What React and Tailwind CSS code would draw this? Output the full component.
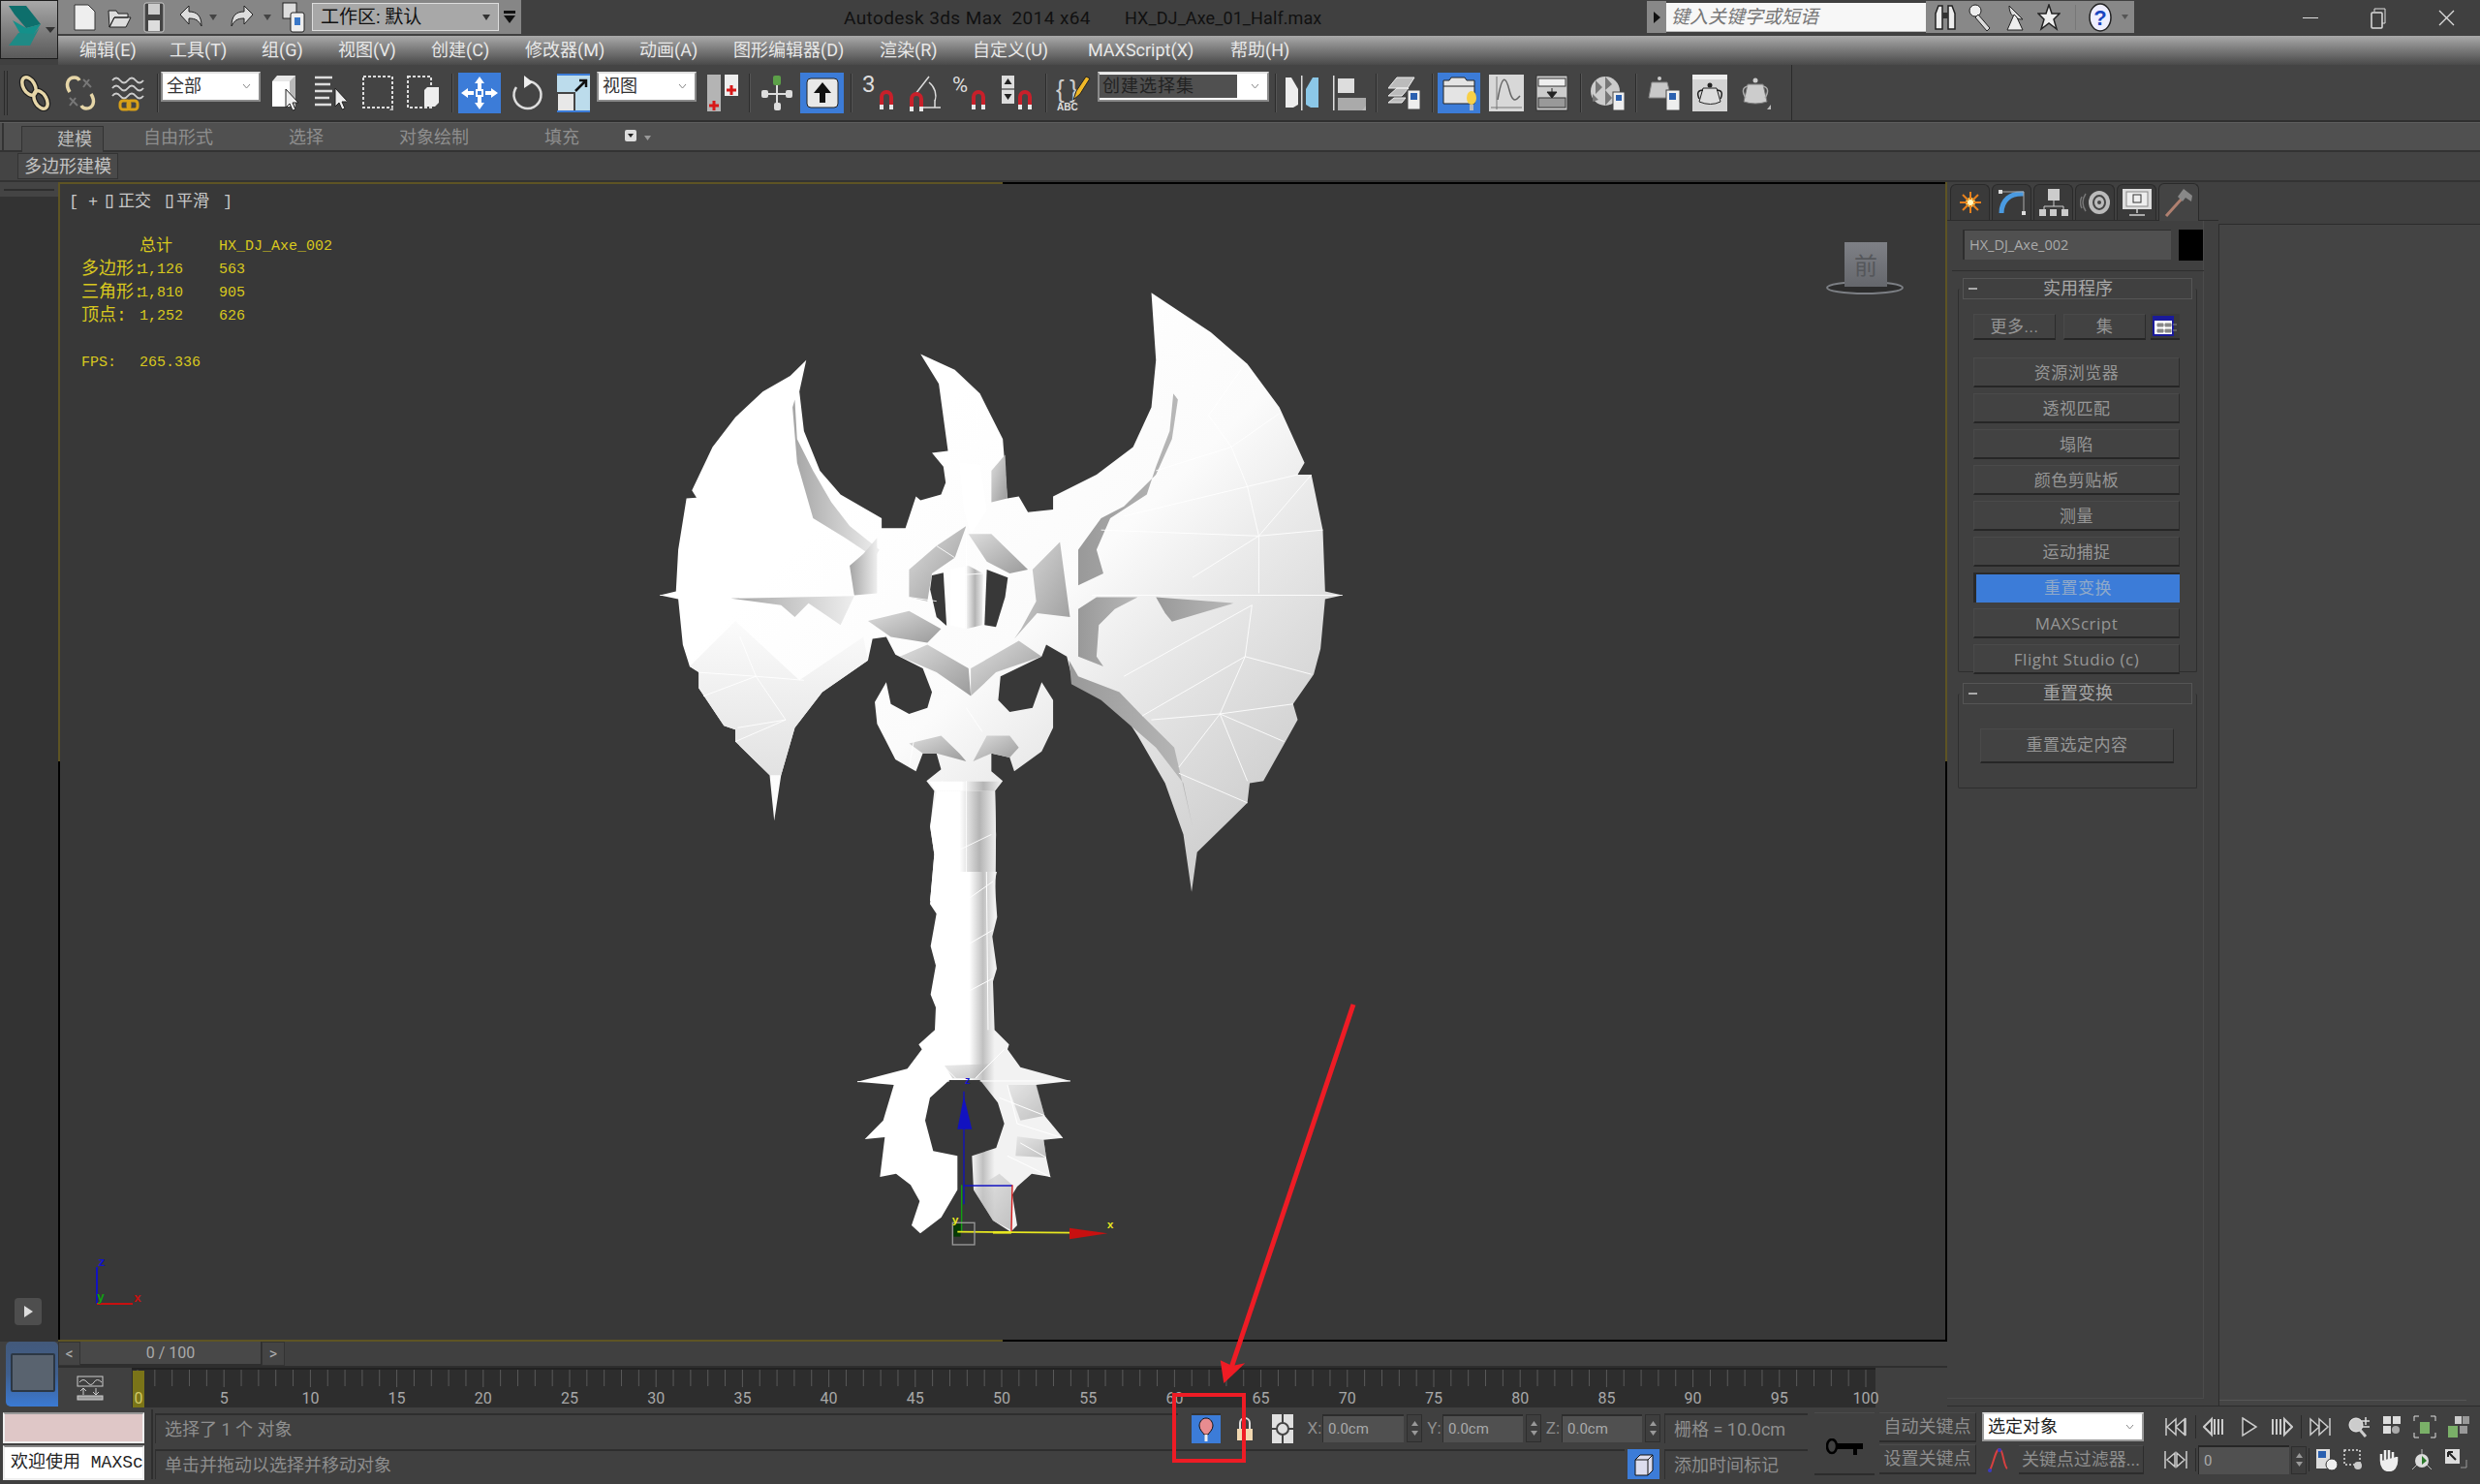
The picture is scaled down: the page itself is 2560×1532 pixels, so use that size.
import React from 'react';

// small helper so every toolbar picture is just an svg with a fixed box
const Svg = ({ w = 34, h = 38, className = '', children }) => (
  <svg width={w} height={h} viewBox={`0 0 ${w} ${h}`} className={`shrink-0 ${className}`}>
    {children}
  </svg>
);

const Sep = ({ className = '' }) => <div className={`w-[2px] h-[40px] bg-[#2c2c2c] border-r border-[#555] shrink-0 ${className}`} />;

const Flyout = ({ x = 30, y = 36 }) => <path d={`M${x} ${y}l4 -5v5z`} fill="#bbb" />;

const Cursor = ({ x, y }) => (
  <path transform={`translate(${x} ${y})`} d="M0 0v19l4 -4 3 7 3 -1 -3 -7h6z" fill="#eee" stroke="#222" strokeWidth="1" />
);

const Magnet = ({ x, y }) => (
  <g transform={`translate(${x} ${y})`}>
    <path d="M2 20V9a7 7 0 0 1 14 0v11h-4V9a3 3 0 0 0 -6 0v11z" fill="#c8202a" />
    <rect x="2" y="17" width="4" height="5" fill="#e8e8e8" />
    <rect x="12" y="17" width="4" height="5" fill="#e8e8e8" />
  </g>
);

const Dropdown = ({ label, className = '', dark = false }) => (
  <div className={`h-[31px] mb-[13px] shrink-0 bg-white border-2 border-[#8a8a8a] border-t-[#e0e0e0] flex items-center justify-between pr-[8px] ${className}`}>
    {dark ? (
      <div className="h-[24px] flex-1 bg-[#505050] text-[#222] text-[18px] pl-[3px] mr-[14px] leading-[24px] tracking-[1px]">{label}</div>
    ) : (
      <span className="text-[#333] text-[18px] pl-[4px] leading-none">{label}</span>
    )}
    <svg width="9" height="6" viewBox="0 0 9 6"><path d="M1 1l3.5 4L8 1" fill="none" stroke="#888" /></svg>
  </div>
);

const Spinner = ({ className = '' }) => (
  <div className={`w-[16px] h-[29px] shrink-0 bg-[#3e3e3e] border border-[#2e2e2e] flex flex-col items-center justify-around py-[4px] ${className}`}>
    <svg width="7" height="5"><path d="M3.5 0L7 5H0z" fill="#999" /></svg>
    <svg width="7" height="5"><path d="M3.5 5L7 0H0z" fill="#999" /></svg>
  </div>
);

const menus = [
  ['编辑(E)', 'w-[93px]'],
  ['工具(T)', 'w-[95px]'],
  ['组(G)', 'w-[79px]'],
  ['视图(V)', 'w-[96px]'],
  ['创建(C)', 'w-[97px]'],
  ['修改器(M)', 'w-[118px]'],
  ['动画(A)', 'w-[97px]'],
  ['图形编辑器(D)', 'w-[151px]'],
  ['渲染(R)', 'w-[96px]'],
  ['自定义(U)', 'w-[119px]'],
  ['MAXScript(X)', 'w-[147px]'],
  ['帮助(H)', 'w-[100px]'],
];

const TitleBar = () => (
  <div className="h-[37px] bg-[#404040] flex items-center">
    <div className="w-[478px] h-[35px] bg-[#868686] flex items-center shrink-0 mt-[-2px]">
      <Svg w={28} h={30} className="ml-[14px]"><path d="M3 2h14l7 7v19H3z" fill="#eee" stroke="#333" /></Svg>
      <Svg w={26} h={26} className="ml-[8px]"><path d="M2 6h8l2 3h10v4H8l-5 10zM8 13h17l-5 10H3z" fill="#ddd" stroke="#222" /></Svg>
      <Svg w={22} h={32} className="ml-[12px]"><rect x="1" y="1" width="20" height="30" rx="2" fill="#444" stroke="#ccc" /><rect x="5" y="2" width="12" height="11" fill="#ccc" /><rect x="5" y="19" width="12" height="11" fill="#ddd" /></Svg>
      <Svg w={26} h={28} className="ml-[14px]"><path d="M2 11l9 -9v6c8 0 13 4 13 15 -3 -6 -6 -8 -13 -8v6z" fill="#ddd" stroke="#222" /></Svg>
      <svg width="8" height="6" className="ml-[6px]"><path d="M0 0h8L4 6z" fill="#444" /></svg>
      <Svg w={26} h={28} className="ml-[13px]"><path d="M24 11l-9 -9v6C7 8 2 12 2 23c3 -6 6 -8 13 -8v6z" fill="#ddd" stroke="#222" /></Svg>
      <svg width="8" height="6" className="ml-[9px]"><path d="M0 0h8L4 6z" fill="#444" /></svg>
      <Svg w={24} h={32} className="ml-[11px]"><rect x="1" y="1" width="14" height="16" fill="#ddd" stroke="#222" /><rect x="9" y="11" width="14" height="20" rx="2" fill="#eee" stroke="#222" /><rect x="13" y="16" width="6" height="8" fill="#3a78c8" /></Svg>
      <div className="ml-[7px] w-[193px] h-[29px] bg-[#a8a8a8] border border-[#ddd] flex items-center justify-between px-[8px] shrink-0">
        <span className="text-[#111] text-[19px] leading-none">工作区: 默认</span>
        <svg width="8" height="6"><path d="M0 0h8L4 6z" fill="#333" /></svg>
      </div>
      <svg width="12" height="14" className="ml-[5px]"><path d="M0 0h12v3H0zM0 5h12L6 13z" fill="#111" /></svg>
    </div>
    <div className="ml-[333px] w-[254px] text-[#111] text-[19px] tracking-[0.4px] whitespace-pre leading-none">Autodesk 3ds Max  2014 x64</div>
    <div className="ml-[36px] w-[204px] text-[#111] text-[18px] tracking-[0.1px] whitespace-nowrap leading-none">HX_DJ_Axe_01_Half.max</div>
    <div className="ml-[335px] w-[20px] h-[33px] bg-[#888] flex items-center justify-center shrink-0 mt-[-2px]">
      <svg width="7" height="12"><path d="M0 0l7 6 -7 6z" fill="#111" /></svg>
    </div>
    <div className="w-[268px] h-[30px] bg-[#f7f7f7] border-b border-[#bbb] text-[#777] italic text-[19px] leading-[30px] pl-[5px] shrink-0 mt-[-2px]">键入关键字或短语</div>
    <div className="w-[215px] h-[33px] bg-[#888] flex items-center shrink-0 mt-[-2px]">
      <Svg w={24} h={28} className="ml-[8px]"><path d="M2 26V10l3 -8h4v24zM15 26V2h4l3 8v16z" fill="#eee" stroke="#222" strokeWidth="1.5" /><rect x="9" y="9" width="6" height="6" fill="#333" /></Svg>
      <Svg w={24} h={30} className="ml-[12px]"><circle cx="7" cy="8" r="6" fill="#eee" stroke="#222" /><path d="M10 12l12 14 -3 3L7 15z" fill="#ddd" stroke="#222" /></Svg>
      <Svg w={24} h={30} className="ml-[12px]"><path d="M6 3c0 9 5 14 14 14z" fill="#ddd" stroke="#222" /><path d="M11 12L4 28h16l-6 -13z" fill="#eee" stroke="#222" /></Svg>
      <Svg w={24} h={28} className="ml-[11px]"><path d="M12 1l3 9h8l-6 6 3 10 -8 -6 -8 6 3 -10 -6 -6h8z" fill="#eee" stroke="#222" strokeWidth="1.5" /></Svg>
      <div className="ml-[15px] w-[1px] h-[26px] bg-[#777]" />
      <Svg w={26} h={30} className="ml-[12px]"><ellipse cx="13" cy="15" rx="11" ry="14" fill="#eef" stroke="#222" strokeWidth="1.5" /><text x="13" y="23" textAnchor="middle" fontSize="22" fontWeight="700" fill="#1a46c0" fontFamily="Liberation Sans">?</text></Svg>
      <svg width="7" height="5" className="ml-[9px]"><path d="M0 0h7L3.5 5z" fill="#555" /></svg>
    </div>
    <div className="ml-[174px] w-[16px] h-[1px] bg-[#ddd] shrink-0" />
    <svg width="16" height="22" className="ml-[54px] shrink-0"><rect x="1" y="5" width="11" height="16" rx="1" fill="none" stroke="#ddd" strokeWidth="1.5" /><path d="M4 4V1h11v15h-3" fill="none" stroke="#ddd" /></svg>
    <svg width="17" height="17" className="ml-[54px] shrink-0"><path d="M1 1l15 15M16 1L1 16" stroke="#ddd" strokeWidth="1.3" /></svg>
  </div>
);

const Toolbar = () => (
  <div className="h-[59px] flex bg-[#444] border-b-2 border-[#2f2f2f]">
    <div className="w-[1850px] flex items-center border-r border-[#2a2a2a] relative">
      <div className="w-[4px] h-[46px] ml-[4px] border-x border-[#2a2a2a] shrink-0 mr-[-8px]" />
      <Svg className="ml-[19px]"><g fill="none" stroke="#1f1f1f" strokeWidth="6"><ellipse cx="11" cy="12" rx="6" ry="10" transform="rotate(-30 11 12)" /><ellipse cx="23" cy="26" rx="6" ry="10" transform="rotate(-30 23 26)" /></g><g fill="none" stroke="#e6d6a8" strokeWidth="3.5"><ellipse cx="11" cy="12" rx="6" ry="10" transform="rotate(-30 11 12)" /><ellipse cx="23" cy="26" rx="6" ry="10" transform="rotate(-30 23 26)" /></g></Svg>
      <Svg className="ml-[13px]"><path d="M6 18C1 10 4 3 11 3c3 0 4 1 5 3M28 20c5 8 2 15 -5 15 -3 0 -4 -1 -5 -3" fill="none" stroke="#e6d6a8" strokeWidth="3.5" /><path d="M20 5l8 8M26 5l-6 8M6 24l8 8M12 24l-6 8" stroke="#777" strokeWidth="2" /></Svg>
      <Svg className="ml-[15px]"><path d="M1 6q4 -5 8 0t8 0 8 0 8 0M1 14q4 -5 8 0t8 0 8 0 8 0M1 22q4 -5 8 0t8 0 8 0 8 0" fill="none" stroke="#ccc" strokeWidth="2" /><g fill="none" stroke="#d8a018" strokeWidth="3"><rect x="9" y="27" width="10" height="9" rx="3" /><rect x="17" y="27" width="10" height="9" rx="3" /></g></Svg>
      <Sep className="ml-[13px]" />
      <Dropdown label="全部" className="ml-[2px] w-[103px]" />
      <Svg className="ml-[11px]"><path d="M1 7l5 -6h19v32H1z" fill="#e8e8e8" /><path d="M1 7h18v26H1z" fill="#fff" /><path d="M19 7l6 -6v32l-6 0z" fill="#b8b8b8" /><Cursor x={15} y={15} /></Svg>
      <Svg className="ml-[10px]"><path d="M1 3h18M1 10h16M1 17h18M1 24h15M1 31h17" stroke="#ddd" strokeWidth="2.5" /><Cursor x={22} y={14} /></Svg>
      <Svg className="ml-[15px]"><rect x="2" y="2" width="30" height="32" fill="none" stroke="#ddd" strokeWidth="2" strokeDasharray="3 2" /><Flyout x={29} y={37} /></Svg>
      <Svg className="ml-[13px]"><rect x="1" y="2" width="24" height="32" fill="none" stroke="#ddd" strokeWidth="2" strokeDasharray="3 2" /><path d="M18 16l3 -3h12v16l-4 4H18z" fill="#eee" /></Svg>
      <Sep className="ml-[12px]" />
      <Svg w={44} h={42} className="ml-[5px]"><rect width="44" height="42" fill="#3c7cd8" /><path d="M22 4l5 7h-3v6h-4v-6h-3zM22 38l5 -7h-3v-6h-4v6h-3zM3 21l7 -5v3h6v4h-6v3zM41 21l-7 -5v3h-6v4h6v3z" fill="#fff" /><rect x="19" y="18" width="6" height="6" fill="none" stroke="#fff" strokeWidth="2" /></Svg>
      <Svg className="ml-[10px]"><path d="M17 7a14 14 0 1 1 -11 6" fill="none" stroke="#ddd" strokeWidth="2.5" /><path d="M14 1l9 7 -9 6z" fill="#eee" /></Svg>
      <Svg w={34} h={40} className="ml-[14px]"><path d="M0 0h34v40H0z" fill="#bcdcec" /><rect y="0" x="0" width="34" height="2" fill="#3c7cd8" /><rect x="0" y="20" width="18" height="20" fill="#e8e8e8" stroke="#444" strokeWidth="2" /><path d="M19 18l10 -10M23 7h7v7" fill="none" stroke="#111" strokeWidth="2.5" /><rect x="0" y="38" width="34" height="2" fill="#3c7cd8" /></Svg>
      <Dropdown label="视图" className="ml-[7px] w-[103px]" />
      <Svg h={40} className="ml-[10px]"><rect x="1" y="1" width="14" height="38" fill="#b4b4b4" /><rect x="19" y="1" width="14" height="22" fill="#eee" /><path d="M8 28v10M3 33h10M26 12v10M21 17h10" stroke="#d81818" strokeWidth="3" /></Svg>
      <Sep className="ml-[10px]" />
      <Svg className="ml-[10px]"><path d="M17 8v24M4 20h26" stroke="#ddd" strokeWidth="2" /><rect x="13" y="1" width="8" height="10" rx="2" fill="#5ca048" /><rect x="1" y="16" width="7" height="8" rx="2" fill="#ddd" /><rect x="26" y="16" width="7" height="8" rx="2" fill="#ddd" /><rect x="14" y="29" width="7" height="8" rx="2" fill="#ddd" /></Svg>
      <Svg w={45} h={42} className="ml-[7px]"><rect width="45" height="42" fill="#3c7cd8" /><rect x="7" y="6" width="32" height="30" rx="4" fill="#e8e8e8" stroke="#222" /><path d="M23 10l9 11h-6v10h-6V21h-6z" fill="#111" /></Svg>
      <Sep className="ml-[7px]" />
      <Svg className="ml-[10px]"><text x="0" y="18" fontSize="24" fill="#ddd" fontFamily="Roboto">3</text><Magnet x={16} y={14} /></Svg>
      <Svg className="ml-[13px]"><path d="M8 20L22 2M22 8a18 18 0 0 1 6 20M14 34h20M28 26v8" fill="none" stroke="#ddd" strokeWidth="1.5" /><Magnet x={0} y={16} /></Svg>
      <Svg w={36} h={38} className="ml-[12px]"><text x="0" y="18" fontSize="22" fill="#ddd" fontFamily="Roboto">%</text><Magnet x={18} y={14} /></Svg>
      <Svg className="ml-[14px]"><rect x="1" y="1" width="13" height="29" fill="#ddd" /><path d="M7.5 4l4 6h-8zM7.5 26l4 -6h-8z" fill="#222" /><path d="M1 15h13" stroke="#222" /><Magnet x={16} y={14} /></Svg>
      <Sep className="ml-[12px]" />
      <Svg w={36} className="ml-[9px]"><text x="0" y="24" fontSize="26" fill="#ccc" fontFamily="Liberation Sans">{'{'}</text><text x="14" y="24" fontSize="26" fill="#ccc" fontFamily="Liberation Sans">{'}'}</text><path d="M18 26l3 -9L31 2l4 2 -10 16z" fill="#f0b828" stroke="#222" /><text x="1" y="37" fontSize="10" fontWeight="700" fill="#ddd" fontFamily="Liberation Sans">ABC</text></Svg>
      <Dropdown label="创建选择集" dark className="ml-[7px] w-[177px]" />
      <Sep className="ml-[6px]" />
      <Svg w={36} h={38} className="ml-[8px]"><path d="M1 3h6l7 12v16l-5 3H1z" fill="#eee" /><rect x="17" y="1" width="1.5" height="36" fill="#ddd" /><path d="M35 3h-6l-7 12v16l5 3h8z" fill="#8cc8e8" /></Svg>
      <Svg w={36} h={38} className="ml-[14px]"><rect x="0" y="1" width="1.5" height="36" fill="#ddd" /><rect x="5" y="4" width="17" height="15" fill="#ddd" /><rect x="5" y="24" width="29" height="13" fill="#aaa" /><Flyout x={30} y={37} /></Svg>
      <Sep className="ml-[8px]" />
      <Svg className="ml-[11px]"><path d="M0 14l9 -11h18l-7 11zM0 22l9 -8h12l-7 8zM0 29l6 -5h12l-4 5z" fill="#bbb" stroke="#eee" /><rect x="20" y="16" width="13" height="20" fill="#eee" stroke="#444" /><rect x="23" y="19" width="7" height="7" fill="#2a60b0" /></Svg>
      <Sep className="ml-[11px]" />
      <Svg w={44} h={42} className="ml-[4px]"><rect width="44" height="42" fill="#3c7cd8" /><path d="M6 8h6l2 -3h14l2 3h8v24H6z" fill="#e4e4e4" stroke="#222" /><path d="M6 14h32" stroke="#222" /><ellipse cx="35" cy="26" rx="5" ry="7" fill="#f8d048" /><rect x="33" y="33" width="4" height="6" fill="#bbb" /></Svg>
      <Svg w={36} h={38} className="ml-[9px]"><rect width="36" height="38" fill="#d8d8d8" /><path d="M8 2v34M2 34h32" stroke="#777" /><path d="M9 26c5 -30 9 -22 12 -10s6 12 11 6" fill="none" stroke="#666" strokeWidth="1.5" /></Svg>
      <Svg className="ml-[12px]"><rect x="1" y="1" width="32" height="36" fill="#ccc" stroke="#333" /><rect x="3" y="4" width="28" height="8" fill="#eee" stroke="#333" /><rect x="3" y="24" width="28" height="10" fill="#999" stroke="#333" /><path d="M17 14v8M12 18l5 6 5 -6z" fill="#222" stroke="#222" /></Svg>
      <Sep className="ml-[12px]" />
      <Svg w={36} h={38} className="ml-[9px]"><circle cx="15" cy="17" r="15" fill="#ccc" /><path d="M5 6l7 7 -7 7zM15 2l7 8 -7 6zM15 16l7 8 -7 8zM2 20l6 6 -6 2z" fill="#777" /><rect x="23" y="18" width="12" height="19" fill="#eee" stroke="#444" /><rect x="26" y="21" width="6" height="6" fill="#2a60b0" /></Svg>
      <Sep className="ml-[10px]" />
      <Svg w={36} h={38} className="ml-[9px]"><path d="M6 8h16l4 16H3z" fill="#c8c8c8" stroke="#888" /><circle cx="14" cy="4" r="2" fill="#ccc" /><rect x="21" y="16" width="14" height="21" fill="#eee" stroke="#444" /><rect x="24" y="19" width="7" height="7" fill="#2a60b0" /></Svg>
      <Svg w={36} h={38} className="ml-[12px]"><rect width="36" height="38" fill="#d4d4d4" /><rect width="36" height="5" fill="#eee" /><path d="M11 14h14l4 14q-10 5 -22 0z" fill="#ddd" stroke="#222" /><path d="M11 16q-8 0 -4 9M25 16q8 0 4 9" fill="none" stroke="#222" strokeWidth="1.5" /><circle cx="18" cy="11" r="2.5" fill="#222" /></Svg>
      <Svg className="ml-[13px]"><path d="M8 10h16l4 18q-12 4 -24 0z" fill="#ccc" stroke="#777" /><path d="M8 12q-8 2 -2 12M24 12q8 2 2 12" fill="none" stroke="#aaa" strokeWidth="1.5" /><circle cx="16" cy="6" r="2.5" fill="#ccc" /><Flyout x={28} y={36} /></Svg>
    </div>
  </div>
);

const Ribbon = () => (
  <div className="shrink-0">
    <div className="h-[31px] bg-[#505050] border-t border-[#5e5e5e] border-b-2 border-b-[#333] flex items-end text-[18px] text-[#8e8e8e] leading-none">
      <div className="w-[22px] h-full border-l-2 border-[#333] ml-[2px] shrink-0 mr-[-2px]" />
      <div className="w-[85px] h-[27px] bg-[#4a4a4a] border-x border-t border-[#333] text-[#bdbdbd] flex items-center pl-[36px] shrink-0 mb-[-2px]">建模</div>
      <span className="ml-[41px] w-[72px] mb-[4px] shrink-0">自由形式</span>
      <span className="ml-[78px] w-[37px] mb-[4px] shrink-0">选择</span>
      <span className="ml-[77px] w-[72px] mb-[4px] shrink-0">对象绘制</span>
      <span className="ml-[78px] w-[36px] mb-[4px] shrink-0">填充</span>
      <svg width="20" height="14" className="ml-[47px] mb-[7px] shrink-0"><rect width="12" height="12" rx="2" fill="#ddd" /><path d="M3 4h6L6 8z" fill="#222" /></svg>
      <svg width="7" height="5" className="mb-[10px] shrink-0"><path d="M0 0h7L3.5 5z" fill="#999" /></svg>
    </div>
    <div className="h-[31px] bg-[#444] border-b-2 border-[#333] flex items-center pl-[18px]">
      <div className="w-[104px] h-[27px] bg-[#4a4a4a] border border-[#333] text-[#c4c4c4] text-[18px] flex items-center justify-center leading-none">多边形建模</div>
    </div>
  </div>
);

const AxeHead = () => (
  <g transform="translate(660 290) scale(.4719 .4082)">
    <polygon fill="url(#axeBody)" points="365,200 330,240 270,280 210,345 160,420 115,530 125,548 103,550 85,680 80,785 45,795 85,805 95,920 110,975 130,990 130,1030 185,1125 210,1135 210,1165 285,1250 295,1365 310,1250 340,1130 400,1040 500,960 510,905 540,900 560,945 620,980 640,1040 630,1080 590,1095 550,1070 540,1015 515,1065 520,1120 560,1210 605,1240 620,1195 650,1195 660,1235 628,1265 645,1290 636,1380 645,1450 636,1568 778,1568 780,1400 778,1290 795,1265 770,1240 770,1195 810,1205 820,1240 880,1190 905,1130 905,1060 880,1015 860,1080 810,1090 785,1060 790,1000 880,950 890,920 935,950 950,1020 1040,1060 1090,1150 1150,1270 1190,1400 1208,1545 1220,1445 1330,1320 1335,1270 1365,1265 1440,1110 1430,1070 1475,995 1490,930 1500,805 1538,795 1500,785 1495,630 1470,490 1440,490 1455,460 1400,320 1330,210 1250,130 1120,30 1130,200 1120,320 1080,420 1000,490 905,545 905,578 850,585 830,545 805,550 795,400 745,285 690,225 615,185 655,260 675,430 640,435 665,470 670,510 660,540 615,555 605,545 582,625 530,625 530,600 440,540 395,480 360,380 350,280" />
    {/* lower left blade is a touch greyer, so its wires show */}
    <polygon fill="url(#lowerLeft)" points="130,990 130,1030 185,1125 210,1135 210,1165 285,1250 310,1250 340,1130 400,1040 500,960 490,900 350,1010 210,860 110,975" />
    {/* shaded inner rims */}
    <g fill="url(#rimL)">
      <polygon points="335,320 340,300 345,400 380,480 420,560 460,620 525,680 515,700 450,650 380,600 345,460" />
      <polygon points="490,690 520,650 520,790 470,795 460,720" />
      <polygon points="200,803 470,797 440,870 370,815 340,850 310,820" />
    </g>
    <g fill="url(#rimR)">
      <polygon points="1168,285 1178,300 1165,400 1130,490 1060,570 1010,600 960,680 960,770 1015,740 1000,680 1030,600 1110,540 1130,470 1160,380" />
      <polygon points="960,830 1000,800 1090,800 1040,830 1005,870 1000,950 1015,975 960,950" />
      <polygon points="1130,800 1300,815 1165,862 1150,840" />
      <polygon points="940,960 960,1000 1050,1040 1100,1100 1170,1180 1210,1380 1190,1270 1130,1180 1070,1120 1010,1060 945,1020" />
    </g>
    <g fill="url(#facet)">
      <polygon points="590,730 650,670 715,620 690,700 640,740 630,810 590,800" />
      <polygon points="720,640 770,640 850,730 810,740 760,710" />
      <polygon points="500,860 590,835 660,880 630,915 550,900" />
      <polygon points="570,950 630,920 720,980 725,1050 650,990" />
      <polygon points="725,980 830,910 880,950 780,990 725,1050" />
      <polygon points="860,730 920,660 942,850 870,840 820,905 835,880 868,810" />
      <polygon points="590,1170 660,1150 700,1195 715,1215 650,1195 620,1195" />
      <polygon points="730,1215 760,1150 810,1150 830,1180 810,1205 770,1195" />
      <polygon points="770,480 800,440 805,550 770,560" />
    </g>
    <polygon fill="url(#handle)" points="680,730 720,720 752,740 750,870 715,880 680,870" />
    <polygon fill="url(#handle)" points="650,1290 778,1290 780,1400 778,1568 636,1568 645,1450 636,1380" />
    <polygon fill="url(#handle)" points="634,1266 792,1266 776,1290 648,1290" />
    <polygon fill="#fff" points="700,460 745,465 760,580 725,640 710,580" />
    {/* eye holes */}
    <polygon fill="#383838" points="640,745 665,738 672,872 650,850 636,780" />
    <polygon fill="#383838" points="760,730 806,750 800,800 780,875 755,870" />
    {/* wire lines */}
    <g stroke="#fff" strokeWidth="2" fill="none">
      <path d="M1245,340 1295,420 1330,520 1355,645 1355,790M1295,420 1130,480M1400,335 1295,420M1325,210 1245,340M1330,520 1060,595M1440,490 1330,520M1355,645 1010,630M1470,490 1355,645 1210,750M1495,630 1355,645" />
      <path d="M1340,820 1325,950 1270,1095 1330,1265M1325,950 1470,995M1325,950 1100,1100M1270,1095 1430,1070M1270,1095 1120,1110M1270,1095 1180,1230M1270,1095 1410,1165M1180,1245 1330,1320M1340,820 1060,1000" />
      <path d="M255,1000 130,990M255,1000 140,1050M255,1000 320,1110M220,900 255,1000M320,1110 210,1165M255,1000 360,1010M215,1130 320,1110" />
      <path d="M715,1290 715,1568M662,1265 650,1290M715,1265 715,1290M770,1400 680,1450M770,1515 720,1568M715,1080 750,1140M600,1165 590,1230M680,745 752,740M715,620 715,880M650,670 690,700M590,800 650,810" />
      <path d="M45,795 470,795M990,795 1538,795" />
    </g>
  </g>
);

const AxeBottom = () => (
  <g transform="translate(840 900) scale(.3333)">
    <polygon fill="url(#handle2)" points="370,0 360,100 380,130 362,230 378,290 362,380 378,420 375,490 325,535 335,550 290,610 135,650 248,660 215,770 158,828 220,822 205,945 255,935 300,970 328,1020 303,1095 330,1120 395,1070 445,985 445,880 370,865 345,770 360,700 420,645 515,645 570,715 590,780 565,855 490,880 495,985 555,1080 610,1115 630,1095 615,1000 630,975 675,935 733,945 720,885 712,830 772,824 715,755 688,660 795,648 640,605 600,550 605,535 560,490 555,340 567,300 553,200 568,140 560,30 567,0" />
    <g fill="url(#facet)" opacity=".55">
      <polygon points="495,985 575,935 615,970 612,1110 555,1080" />
      <polygon points="600,660 690,660 715,755 640,770" />
      <polygon points="630,820 712,830 720,885 625,880" />
      <polygon points="405,600 540,595 500,640 430,640" />
    </g>
    <g stroke="#fff" strokeWidth="3" fill="none">
      <path d="M535,0 540,490M555,30 470,90M555,180 470,230M555,330 470,375M340,540 440,640M590,550 500,640M135,650 420,648M515,648 795,648M600,660 630,780 770,824M575,700 715,755M640,840 720,885M600,880 733,945M370,940 370,1060M255,935 360,880" />
    </g>
    {/* transform gizmo */}
    <path d="M465 680V1030" stroke="#1212c0" strokeWidth="4" />
    <polygon fill="#1212c0" points="465,695 445,797 490,797" />
    <text x="467" y="657" fontSize="30" fontWeight="700" fill="#1212d0" fontFamily="Liberation Mono">z</text>
    <path d="M458 970V1115" stroke="#10a010" strokeWidth="4" />
    <path d="M465 972H615" stroke="#1212c0" strokeWidth="4" />
    <path d="M615 970L612 1115" stroke="#d81818" strokeWidth="4" />
    <rect x="433" y="1090" width="22" height="40" fill="#063a06" />
    <path d="M445 1115L800 1118" stroke="#e8e820" strokeWidth="5" />
    <path d="M555 1117H612" stroke="#e8e820" strokeWidth="8" />
    <polygon fill="#c81010" points="792,1103 792,1138 910,1120" />
    <rect x="430" y="1087" width="68" height="68" fill="none" stroke="#999" strokeWidth="4" />
    <text x="908" y="1104" fontSize="34" fontWeight="700" fill="#e8e820" fontFamily="Liberation Mono">x</text>
    <text x="428" y="1088" fontSize="34" fontWeight="700" fill="#e8e820" fontFamily="Liberation Mono">y</text>
  </g>
);

const ViewportArt = () => (
  <svg width="1946" height="1193" viewBox="62 190 1946 1193" className="absolute left-0 top-0 pointer-events-none">
    <defs>
      <linearGradient id="axeBody" gradientUnits="userSpaceOnUse" x1="500" y1="500" x2="1400" y2="1300">
        <stop offset="0" stopColor="#fff" /><stop offset=".42" stopColor="#fbfbfb" /><stop offset=".62" stopColor="#eaeaea" /><stop offset="1" stopColor="#cfcfcf" />
      </linearGradient>
      <linearGradient id="lowerLeft" x1="0" y1="0" x2="0" y2="1">
        <stop offset="0" stopColor="#fbfbfb" /><stop offset="1" stopColor="#e2e2e2" />
      </linearGradient>
      <linearGradient id="rimL" x1="0" y1="0" x2="1" y2="0">
        <stop offset="0" stopColor="#a4a4a4" /><stop offset="1" stopColor="#eee" />
      </linearGradient>
      <linearGradient id="rimR" x1="1" y1="0" x2="0" y2="0">
        <stop offset="0" stopColor="#b8b8b8" /><stop offset="1" stopColor="#999" />
      </linearGradient>
      <linearGradient id="facet" x1="0" y1="0" x2="1" y2="1">
        <stop offset="0" stopColor="#ddd" /><stop offset="1" stopColor="#9a9a9a" />
      </linearGradient>
      <linearGradient id="handle" x1="0" y1="0" x2="1" y2="0">
        <stop offset="0" stopColor="#fff" /><stop offset=".45" stopColor="#fff" /><stop offset=".75" stopColor="#b4b4b4" /><stop offset="1" stopColor="#efefef" />
      </linearGradient>
      <linearGradient id="handle2" gradientUnits="userSpaceOnUse" x1="440" y1="0" x2="560" y2="0">
        <stop offset="0" stopColor="#fff" /><stop offset=".35" stopColor="#fff" /><stop offset=".7" stopColor="#c0c0c0" /><stop offset="1" stopColor="#f2f2f2" />
      </linearGradient>
      <linearGradient id="cube" x1="0" y1="0" x2="0" y2="1">
        <stop offset="0" stopColor="#7e8086" /><stop offset="1" stopColor="#65676c" />
      </linearGradient>
    </defs>
    <AxeHead />
    <AxeBottom />
    {/* view cube */}
    <ellipse cx="1925" cy="297" rx="39" ry="6" fill="#2c2c2c" stroke="#7c7f84" strokeWidth="2" />
    <rect x="1904" y="250" width="44" height="46" fill="url(#cube)" />
    <text x="1926" y="283" fontSize="24" textAnchor="middle" fill="#55575b" fontFamily="Noto Sans CJK SC">前</text>
    {/* corner tripod */}
    <path d="M100 1308V1346" stroke="#1212c0" strokeWidth="2" />
    <path d="M100 1346H137" stroke="#c81010" strokeWidth="2" />
    <text x="101" y="1307" fontSize="13" fontWeight="700" fill="#1212d0" fontFamily="Liberation Mono">z</text>
    <text x="100" y="1343" fontSize="13" fontWeight="700" fill="#10a010" fontFamily="Liberation Mono">y</text>
    <text x="138" y="1344" fontSize="13" fontWeight="700" fill="#c81010" fontFamily="Liberation Mono">x</text>
  </svg>
);

const stats = [
  ['', '总计', 'HX_DJ_Axe_002'],
  ['多边形:', '1,126', '563'],
  ['三角形:', '1,810', '905'],
  ['顶点:', '1,252', '626'],
];

const Viewport = () => (
  <div className="w-[1950px] h-[1197px] shrink-0 relative bg-[#383838] border-2 border-black">
    {/* gold half of the active viewport frame */}
    <div className="absolute left-[-2px] top-[-2px] w-[975px] h-[2px] bg-[#5e5424]" />
    <div className="absolute left-[-2px] bottom-[-2px] w-[975px] h-[2px] bg-[#5e5424]" />
    <div className="absolute left-[-2px] top-[-2px] w-[2px] h-[598px] bg-[#5e5424]" />
    <div className="absolute right-[-2px] top-[-2px] w-[2px] h-[598px] bg-[#5e5424]" />
    <ViewportArt />
    <div className="relative pl-[9px] pt-[5px] [font-family:'Liberation_Mono','Noto_Sans_CJK_SC',monospace]">
      <div className="text-[#c8c8c8] text-[17px] h-[26px] whitespace-pre flex items-center leading-none">
        <span className="w-[20px]">[</span><span className="w-[15px]">+</span><span className="w-[16px] text-[23px]">▯</span><span className="w-[46px]">正交</span><span className="w-[14px] text-[23px]">▯</span><span className="w-[48px]">平滑</span><span>]</span>
      </div>
      <div className="pl-[13px] pt-[21px] text-[#d8c81e] text-[15px]">
        {stats.map((r) => (
          <div key={r[2]} className="h-[24px] flex items-center">
            <span className="w-[60px] text-[18px] leading-none whitespace-nowrap">{r[0]}</span>
            <span className={`w-[82px] leading-none ${r[1] === '总计' ? 'text-[17px]' : ''}`}>{r[1]}</span>
            <span className="leading-none">{r[2]}</span>
          </div>
        ))}
        <div className="h-[24px] mt-[24px] flex items-center">
          <span className="w-[60px] leading-none">FPS:</span>
          <span className="leading-none">265.336</span>
        </div>
      </div>
    </div>
  </div>
);

const LeftStrip = () => (
  <div className="w-[60px] h-[1197px] shrink-0 bg-[#333] flex flex-col">
    <div className="h-[15px] bg-[#444] flex items-center px-[4px]"><div className="w-full h-[2px] bg-[#2e2e2e]" /></div>
    <div className="flex-1 flex items-end justify-center pb-[17px]">
      <div className="w-[28px] h-[28px] ml-[-2px] rounded-[4px] bg-[#4e4e4e] flex items-center justify-center">
        <svg width="9" height="12"><path d="M0 0l9 6 -9 6z" fill="#ddd" /></svg>
      </div>
    </div>
  </div>
);

const Ruler = () => (
  <svg width="1800" height="41" viewBox="136 1414 1800 41" className="shrink-0 overflow-visible">
    <rect x="136" y="1414" width="1800" height="41" fill="#2d2d2d" />
    <rect x="136" y="1414" width="1800" height="2" fill="#222" />
    {Array.from({ length: 101 }, (_, i) => {
      const x = 142 + 17.84 * i;
      const major = i % 5 === 0;
      return (
        <g key={i}>
          <path d={`M${x} 1416V${major ? 1434 : 1433}`} stroke="#5a5a5a" />
          {major && i > 0 && (
            <text x={x} y="1451" textAnchor="middle" fontSize="16" fill="#a8a8a8" fontFamily="Roboto">{i}</text>
          )}
        </g>
      );
    })}
    <rect x="137" y="1417" width="12" height="38" fill="#7a7418" />
    <text x="143" y="1451" textAnchor="middle" fontSize="16" fill="#cfc868" fontFamily="Roboto">0</text>
  </svg>
);

const Timeline = () => (
  <div className="h-[70px] flex bg-[#404040] shrink-0">
    <div className="w-[60px] shrink-0 pl-[6px]">
      <div className="w-[54px] h-[67px] rounded-t-[5px] rounded-bl-[5px] bg-gradient-to-b from-[#43597a] via-[#3f5f8e] to-[#3a7ad4] pt-[12px] pl-[5px]">
        <div className="w-[46px] h-[40px] bg-[#59636f] border-2 border-[#2c3744] rounded-[2px]" />
      </div>
    </div>
    <div className="flex-1 flex flex-col">
      <div className="h-[27px] flex items-end text-[#aaa] border-b-2 border-[#2e2e2e]">
        <div className="w-[23px] h-[25px] bg-[#444] border border-[#333] flex items-center justify-center text-[16px] leading-none">&lt;</div>
        <div className="w-[187px] h-[25px] bg-[#484848] border-b-2 border-r border-[#2e2e2e] flex items-center justify-center text-[16px] leading-none">0 / 100</div>
        <div className="w-[24px] h-[25px] bg-[#444] border border-[#333] flex items-center justify-center text-[16px] leading-none">&gt;</div>
      </div>
      <div className="h-[41px] flex items-start">
        <div className="w-[76px] h-[41px] flex items-center pl-[19px] shrink-0">
          <svg width="28" height="26" viewBox="0 0 28 26">
            <rect x="1" y="1" width="26" height="10" fill="none" stroke="#ccc" /><path d="M3 7q4 -5 8 0t7 0 8 0" fill="none" stroke="#ccc" />
            <path d="M7 20v-6M4 16l3 -3 3 3M20 13v6M17 17l3 3 3 -3" fill="none" stroke="#ccc" />
            <rect x="1" y="21" width="26" height="4" fill="#999" stroke="#ccc" />
          </svg>
        </div>
        <Ruler />
      </div>
    </div>
  </div>
);

const panelButtons = ['资源浏览器', '透视匹配', '塌陷', '颜色剪贴板', '测量', '运动捕捉', '重置变换', 'MAXScript', 'Flight Studio (c)'];

const PanelBtn = ({ label, className = '' }) => (
  <div className={`bg-[#424242] border border-[#4a4a4a] border-b-2 border-b-[#262626] border-r-[#2c2c2c] flex items-center justify-center text-[#969696] text-[17px] leading-none tracking-[0.5px] shrink-0 ${className}`}>
    {label}
  </div>
);

// the header sticks out above the group box by half its height
const Rollout = ({ title, className = '', children }) => (
  <div className={`ml-[11px] w-[247px] relative ${className}`}>
    <div className="absolute left-0 right-0 top-[11px] bottom-0 border border-t-0 border-[#2e2e2e] rounded-[2px]" />
    <div className="mx-[5px] h-[22px] border border-[#555] bg-[#404040] flex items-center text-[#a8a8a8] text-[18px] leading-none relative">
      <span className="w-[9px] h-[2px] bg-[#aaa] ml-[5px] shrink-0" />
      <span className="ml-[68px]">{title}</span>
    </div>
    <div className="relative">{children}</div>
  </div>
);

const Tab = ({ children, active = false }) => (
  <div className={active
    ? 'w-[42px] h-[39px] bg-[#444] border border-b-0 border-[#2a2a2a] rounded-t-[6px] flex items-center justify-center mb-[-1px]'
    : 'w-[41px] h-[37px] bg-[#3a3a3a] border border-b-0 border-[#2a2a2a] rounded-t-[6px] flex items-center justify-center'}>
    {children}
  </div>
);

const CommandPanel = () => (
  <div className="w-[280px] h-[1264px] shrink-0 bg-[#404040] border-b border-[#2c2c2c]">
    <div className="h-[40px] flex items-end pl-[3px] gap-[2px] border-b border-[#2c2c2c]">
      <Tab><svg width="22" height="22" viewBox="0 0 22 22"><circle cx="11" cy="11" r="5" fill="#ffe060" /><path d="M11 0v22M0 11h22M3 3l16 16M19 3L3 19" stroke="#e8801c" strokeWidth="2" /><circle cx="11" cy="11" r="3" fill="#fff8c0" /></svg></Tab>
      <Tab><svg width="28" height="26" viewBox="0 0 28 26"><path d="M3 24C3 11 12 3 26 4" fill="none" stroke="#4a9ae0" strokeWidth="5" /><path d="M2 2h24v22" fill="none" stroke="#aaa" /><rect x="0" y="0" width="4" height="4" fill="#ddd" /><rect x="24" y="22" width="4" height="4" fill="#ddd" /></svg></Tab>
      <Tab><svg width="30" height="28" viewBox="0 0 30 28"><rect x="9" y="0" width="12" height="12" fill="#ccc" /><path d="M15 12v6M5 22v-4h20v4" fill="none" stroke="#ccc" /><rect x="0" y="21" width="7" height="7" fill="#ccc" /><rect x="11" y="21" width="7" height="7" fill="#ccc" /><rect x="23" y="21" width="7" height="7" fill="#ccc" /></svg></Tab>
      <Tab><svg width="32" height="26" viewBox="0 0 32 26"><ellipse cx="20" cy="13" rx="11" ry="12" fill="#bbb" /><ellipse cx="20" cy="13" rx="6" ry="7" fill="none" stroke="#444" strokeWidth="2" /><circle cx="20" cy="13" r="2" fill="#444" /><path d="M6 4q-6 9 0 18M2 7q-3 6 0 12" fill="none" stroke="#777" strokeWidth="1.5" /></svg></Tab>
      <Tab><svg width="30" height="28" viewBox="0 0 30 28"><rect x="0" y="0" width="30" height="21" fill="#ddd" /><rect x="4" y="3" width="22" height="15" fill="#eee" stroke="#888" /><rect x="11" y="6" width="8" height="8" fill="none" stroke="#333" /><path d="M15 21v4M7 27h16" stroke="#aaa" strokeWidth="2" /></svg></Tab>
      <Tab active><svg width="30" height="30" viewBox="0 0 30 30"><path d="M2 29L20 9" stroke="#b08070" strokeWidth="3" /><path d="M14 9l6 -8 9 7 -1 6 -6 -4 -3 4z" fill="#888" /></svg></Tab>
    </div>
    <div className="w-[265px] h-[1216px] border-r border-b border-[#4b4b4b]">
      <div className="flex items-start pt-[9px] ml-[16px]">
        <div className="w-[218px] h-[31px] bg-[#505050] border-l-2 border-t border-[#2e2e2e] text-[#aaa] text-[14.5px] leading-[29px] pl-[5px] [font-family:'Open_Sans',sans-serif]">HX_DJ_Axe_002</div>
        <div className="ml-[8px] w-[25px] h-[32px] bg-black shrink-0" />
      </div>
      <div className="ml-[5px] mt-[10px] w-[260px] h-[1px] bg-[#2e2e2e]" />
      <Rollout title="实用程序" className="mt-[7px] h-[407px]">
        <div className="pl-[16px] pt-[15px] flex">
          <PanelBtn label="更多..." className="w-[85px] h-[27px]" />
          <PanelBtn label="集" className="w-[85px] h-[27px] ml-[8px]" />
          <div className="w-[30px] h-[27px] ml-[5px] bg-[#3a3a3a] border-b-2 border-[#262626] flex items-center justify-center shrink-0">
            <svg width="26" height="22" viewBox="0 0 26 22"><rect x="1" y="1" width="20" height="19" fill="#fff" stroke="#1a1a9a" strokeWidth="2" /><rect x="1" y="1" width="20" height="4" fill="#1a1a9a" /><path d="M5 8h6v3H5zM13 8h6v3h-6zM5 14h6v3H5zM13 14h6v3h-6zM21 9h4M21 15h4" fill="#888" stroke="#888" /></svg>
          </div>
        </div>
        <div className="pl-[16px] w-[229px] pt-[18px] flex flex-col gap-[6px]">
          {panelButtons.map((b) => (
            b === '重置变换' ? (
              <div key={b} className="h-[31px] shrink-0 border-l-[3px] border-t-2 border-[#2a2a2a] bg-[#3c7cd8] text-[#8fa9c9] text-[17px] tracking-[0.5px] flex items-center justify-center leading-none">{b}</div>
            ) : (
              <PanelBtn key={b} label={b} className="h-[31px] [font-family:'Open_Sans','Noto_Sans_CJK_SC',sans-serif]" />
            )
          ))}
        </div>
      </Rollout>
      <Rollout title="重置变换" className="mt-[11px] h-[109px]">
        <div className="pt-[25px] pl-[23px]">
          <PanelBtn label="重置选定内容" className="w-[200px] h-[36px]" />
        </div>
      </Rollout>
    </div>
  </div>
);

const RightPanel = () => (
  <div className="flex-1 h-[1221px] bg-[#444] border-l border-t border-[#2c2c2c] mt-[43px]">
    <div className="h-[1214px] w-[255px] border-b border-[#555]" />
    <div className="h-[6px] border-b border-[#2c2c2c]" />
  </div>
);

const Field = ({ children, className = '' }) => (
  <div className={`bg-[#404040] border-t-2 border-l border-[#2e2e2e] flex items-center text-[#8e8e8e] text-[18px] leading-none shrink-0 whitespace-nowrap ${className}`}>
    {children}
  </div>
);

const Coord = ({ className = '' }) => (
  <div className={`h-[29px] bg-[#505050] border-t-2 border-l border-[#2c2c2c] flex items-center text-[#aaa] text-[15px] pl-[5px] leading-none shrink-0 ${className}`}>0.0cm</div>
);

const Lbl = ({ t, className = '' }) => <span className={`text-[#8e8e8e] text-[17px] text-center leading-none shrink-0 ${className}`}>{t}</span>;

const KeyBtn = ({ label, className = '' }) => (
  <div className={`bg-[#404040] border-b-2 border-r border-[#2c2c2c] border-t border-t-[#4c4c4c] flex items-center justify-center text-[#8e8e8e] text-[18px] leading-none whitespace-nowrap shrink-0 ${className}`}>{label}</div>
);

const T = ({ w = 24, className = '', children }) => (
  <svg width={w} height="24" viewBox={`0 0 ${w} 24`} className={`shrink-0 ${className}`}>{children}</svg>
);

const Transport = () => (
  <div className="ml-[21px] flex flex-col shrink-0">
    <div className="h-[36px] flex items-center">
      <T><path d="M2 3v18M22 3v18M12 4L3 12l9 8zM21 4l-9 8 9 8z" fill="#333" stroke="#ccc" strokeWidth="1.5" /></T>
      <div className="ml-[8px] w-[1px] h-[24px] bg-[#2a2a2a]" />
      <T className="ml-[7px]"><path d="M9 4L1 12l8 8zM12 4v16M16 4v16M20 4v16" fill="#333" stroke="#ccc" strokeWidth="2" /></T>
      <T w={18} className="ml-[15px]"><path d="M2 3l14 9 -14 9z" fill="#333" stroke="#ccc" strokeWidth="1.5" /></T>
      <T className="ml-[12px]"><path d="M3 4v16M7 4v16M11 4v16M15 4l8 8 -8 8z" fill="#333" stroke="#ccc" strokeWidth="2" /></T>
      <div className="ml-[8px] w-[1px] h-[24px] bg-[#2a2a2a]" />
      <T className="ml-[7px]"><path d="M2 4l9 8 -9 8zM11 4l9 8 -9 8zM22 3v18" fill="#333" stroke="#ccc" strokeWidth="1.5" /></T>
      <T className="ml-[16px]"><circle cx="9" cy="10" r="7" fill="#ccc" stroke="#eee" /><path d="M13 15l6 7" stroke="#ccc" strokeWidth="3" /><path d="M19 2v8M15 6h8M15 12h8" stroke="#ddd" strokeWidth="1.5" /></T>
      <T w={20} className="ml-[12px]"><rect x="1" y="1" width="8" height="8" fill="#ddd" /><rect x="11" y="1" width="8" height="8" fill="#ddd" /><rect x="1" y="11" width="8" height="8" fill="#ddd" /><circle cx="14" cy="15" r="4" fill="#aaa" /></T>
      <T className="ml-[12px]"><path d="M1 6V1h5M23 6V1h-5M1 18v5h5M23 18v5h-5" fill="none" stroke="#ddd" /><rect x="7" y="7" width="10" height="12" fill="#7ab068" /></T>
      <T className="ml-[10px]"><rect x="9" y="1" width="7" height="8" fill="#ccc" /><rect x="17" y="1" width="7" height="8" fill="#999" /><rect x="2" y="11" width="10" height="12" fill="#7ab068" /><rect x="14" y="11" width="8" height="8" fill="#999" /></T>
    </div>
    <div className="h-[32px] flex items-center">
      <T><path d="M1 3v18M23 3v18M11 5L3 12l8 7zM13 5l8 7 -8 7z" fill="#333" stroke="#ccc" strokeWidth="1.5" /></T>
      <div className="ml-[8px] w-[1px] h-[24px] bg-[#2a2a2a]" />
      <div className="ml-[2px] w-[94px] h-[30px] bg-[#505050] border-t-2 border-l border-[#262626] text-[#aaa] text-[15px] flex items-center pl-[5px] leading-none">0</div>
      <Spinner className="ml-[2px]" />
      <div className="ml-[2px] w-[1px] h-[24px] bg-[#2a2a2a]" />
      <T className="ml-[6px]"><rect x="1" y="1" width="14" height="20" fill="#ddd" /><rect x="3" y="3" width="8" height="7" fill="#2a60b0" /><circle cx="17" cy="17" r="6" fill="#eee" stroke="#333" /></T>
      <T className="ml-[4px]"><rect x="2" y="2" width="16" height="15" fill="none" stroke="#ddd" strokeDasharray="2 2" strokeWidth="1.5" /><circle cx="16" cy="18" r="4" fill="#ccc" /></T>
      <T className="ml-[11px]"><path d="M5 13V6M9 12V2M13 12V2M17 13V4M5 13c0 6 3 10 8 10s8 -4 8 -10V9" fill="#eee" stroke="#eee" strokeWidth="2.5" /></T>
      <T className="ml-[11px]"><path d="M12 1v5M2 22l5 -5M22 22l-5 -5" stroke="#bbb" /><circle cx="12" cy="13" r="7" fill="#ddd" /><path d="M12 8l5 5 -5 4z" fill="#2c7a2c" /></T>
      <T className="ml-[11px]"><rect x="1" y="1" width="15" height="15" fill="#ddd" /><path d="M4 4l8 8M4 4h5M4 4v5" stroke="#222" strokeWidth="2" fill="none" /><path d="M17 20h6v-8" fill="none" stroke="#999" /></T>
    </div>
  </div>
);

const StatusBar = () => (
  <div className="h-[77px] flex bg-[#404040] items-start shrink-0">
    <div className="w-[150px] shrink-0 pl-[3px] pt-[3px]">
      <div className="w-[146px] h-[32px] bg-[#dfc7c7] border-2 border-[#eee] border-t-[#999]" />
      <div className="w-[146px] h-[36px] mt-[2px] bg-white border-2 border-[#eee] border-t-[#888] overflow-hidden whitespace-nowrap text-[#222] text-[18px] leading-[32px] pl-[6px] [font-family:'Liberation_Mono','Noto_Sans_CJK_SC',monospace]">欢迎使用 MAXSc</div>
    </div>
    <div className="w-[2px] h-[72px] bg-[#2e2e2e] ml-[6px] shrink-0" />
    <div className="ml-[2px] w-[1706px] shrink-0 pt-[4px] flex flex-col gap-[6px]">
      <div className="h-[31px] flex items-center">
        <Field className="w-[1056px] h-[31px] pl-[9px]">选择了 1 个 对象</Field>
        <div className="ml-[14px] w-[30px] h-[31px] bg-[#3c7cd8] border-t-2 border-[#333] flex items-center justify-center shrink-0">
          <svg width="16" height="26" viewBox="0 0 16 26"><path d="M8 1c5 0 7 5 7 8 0 4 -4 7 -5 9H6C5 16 1 13 1 9c0 -3 2 -8 7 -8z" fill="#e88c90" stroke="#111" /><rect x="6.5" y="18" width="3" height="7" fill="#eee" /></svg>
        </div>
        <svg width="18" height="26" viewBox="0 0 18 26" className="ml-[16px] shrink-0"><path d="M4 13V7a5 5 0 0 1 10 0v6" fill="none" stroke="#ddd" strokeWidth="2" /><rect x="1" y="13" width="16" height="12" fill="#f2d8b0" /></svg>
        <div className="ml-[19px] w-[22px] h-[30px] bg-[#e0e0e0] flex items-center justify-center shrink-0">
          <svg width="22" height="30" viewBox="0 0 22 30"><circle cx="11" cy="15" r="6" fill="none" stroke="#444" strokeWidth="2" /><path d="M11 0v9M11 21v9M0 15h5M17 15h5" stroke="#444" strokeWidth="2" /></svg>
        </div>
        <Lbl t="X:" className="ml-[14px] w-[16px]" />
        <Coord className="w-[84px]" />
        <Spinner className="ml-[3px]" />
        <Lbl t="Y:" className="ml-[4px] w-[17px]" />
        <Coord className="w-[83px]" />
        <Spinner className="ml-[3px]" />
        <Lbl t="Z:" className="ml-[3px] w-[18px]" />
        <Coord className="w-[83px]" />
        <Spinner className="ml-[3px]" />
        <Field className="ml-[4px] w-[148px] h-[31px] pl-[9px]">栅格 = 10.0cm</Field>
      </div>
      <div className="h-[31px] flex items-center">
        <Field className="w-[1517px] h-[31px] pl-[9px]">单击并拖动以选择并移动对象</Field>
        <div className="ml-[3px] w-[33px] h-[31px] bg-[#3c7cd8] flex items-center justify-center shrink-0">
          <svg width="22" height="24" viewBox="0 0 22 24"><path d="M2 7l5 -5h13v16l-5 5H2z" fill="#dde" stroke="#111" /><path d="M2 7h13v16M15 7l5 -5" fill="none" stroke="#111" /></svg>
        </div>
        <Field className="ml-[5px] w-[148px] h-[31px] pl-[9px]">添加时间标记</Field>
      </div>
    </div>
    <div className="ml-[7px] mt-[3px] w-[62px] h-[65px] bg-[#404040] border-t border-[#4c4c4c] border-b-2 border-b-[#2c2c2c] flex items-center justify-center shrink-0">
      <svg width="38" height="18" viewBox="0 0 38 18" className="mt-[8px]"><ellipse cx="6" cy="8" rx="5" ry="7" fill="none" stroke="#000" strokeWidth="2.5" /><path d="M11 5h27v6h-6v6h-4v-6H11z" fill="#000" /></svg>
    </div>
    <div className="ml-[5px] mt-[3px] w-[100px] shrink-0 flex flex-col gap-[2px]">
      <KeyBtn label="自动关键点" className="h-[31px]" />
      <KeyBtn label="设置关键点" className="h-[31px]" />
    </div>
    <div className="ml-[6px] mt-[3px] w-[167px] shrink-0 flex flex-col gap-[4px]">
      <div className="h-[30px] bg-white border-2 border-[#999] border-t-[#ddd] text-[#222] text-[18px] flex items-center justify-between px-[4px] leading-none">
        选定对象
        <svg width="9" height="6" viewBox="0 0 9 6" className="mr-[4px]"><path d="M1 1l3.5 4L8 1" fill="none" stroke="#888" /></svg>
      </div>
      <div className="h-[30px] flex items-center">
        <svg width="26" height="26" viewBox="0 0 26 26" className="ml-[4px] shrink-0"><path d="M4 24c4 -8 6 -22 10 -22s4 18 8 20" fill="none" stroke="#d84040" strokeWidth="2" /><circle cx="14" cy="3" r="2" fill="#3a3ac0" /><circle cx="4" cy="24" r="2" fill="#3a3ac0" /></svg>
        <KeyBtn label="关键点过滤器..." className="ml-[8px] w-[129px] h-[30px] text-[17px] overflow-hidden" />
      </div>
    </div>
    <Transport />
  </div>
);

const Annotation = () => (
  <svg width="2560" height="1532" viewBox="0 0 2560 1532" className="absolute left-0 top-0 pointer-events-none">
    <path d="M1397 1037L1271 1412" stroke="#ee1c25" strokeWidth="5" />
    <path d="M1264 1426L1261 1406 1272 1411 1282 1409z" fill="#ee1c25" stroke="#ee1c25" strokeWidth="2" />
    <rect x="1212" y="1440" width="72" height="68" fill="none" stroke="#ee1c25" strokeWidth="4" />
  </svg>
);

export default function App() {
  return (
    <div className="w-[2560px] h-[1532px] relative overflow-hidden bg-[#404040] flex flex-col [font-family:Roboto,'Noto_Sans_CJK_SC',sans-serif]">
      <div className="h-[67px] flex shrink-0">
        <div className="w-[60px] h-[61px] bg-gradient-to-b from-[#a8a8a8] to-[#5a5a5a] border border-[#1c1c1c] flex items-start shrink-0">
          <svg width="58" height="58" viewBox="0 0 58 58">
            <path d="M8 5h18l15 19 -15 4 -12 -14z" fill="#0e6f6c" />
            <path d="M12 20l14 8 15 -4 -7 10H20z" fill="#14908a" />
            <path d="M8 46l10 -13 16 1 6 -7 -10 19z" fill="#1f8a85" />
            <path d="M46 27h10l-5 6z" fill="#333" />
          </svg>
        </div>
        <div className="flex-1 flex flex-col">
          <TitleBar />
          <div className="h-[30px] bg-gradient-to-b from-[#aaaaaa] to-[#4a4a4a] flex items-center pl-[22px] text-[#e8e8e8] text-[18px] leading-none">
            {menus.map(([m, w]) => <span key={m} className={`${w} shrink-0`}>{m}</span>)}
          </div>
        </div>
      </div>
      <Toolbar />
      <Ribbon />
      <div className="h-[1267px] flex shrink-0">
        <div className="w-[2010px] shrink-0 flex flex-col">
          <div className="flex"><LeftStrip /><Viewport /></div>
          <Timeline />
        </div>
        <div className="flex-1 flex items-start">
          <CommandPanel />
          <RightPanel />
        </div>
      </div>
      <StatusBar />
      <Annotation />
    </div>
  );
}
